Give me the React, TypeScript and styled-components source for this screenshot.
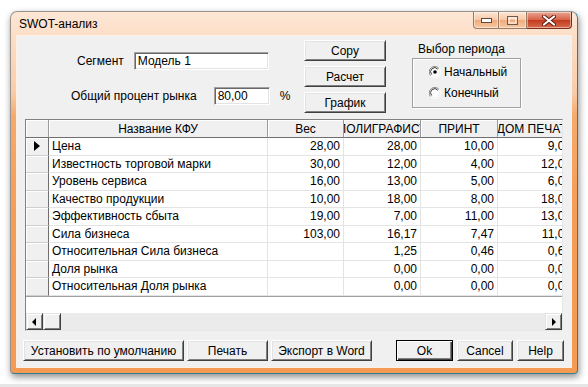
import styled, { createGlobalStyle } from "styled-components";

const GlobalStyle = createGlobalStyle`
  *, *::before, *::after { box-sizing: border-box; }
  html, body { margin: 0; padding: 0; background: #fff; }
  body {
    font-family: "Liberation Sans", Arial, sans-serif;
    font-size: 12px;
    color: #000;
  }
`;

const Page = styled.div`
  width: 588px;
  height: 387px;
  overflow: hidden;
  padding: 11px 0 0 10px;
  box-shadow: inset 0 -3px 0 #e6e6e6;
`;

const Window = styled.div`
  width: 568px;
  height: 363px;
  display: flex;
  flex-direction: column;
  border: 1px solid;
  border-color: #9a918b #2f7f8e #2f7f8e #9a918b;
  border-radius: 7px 7px 4px 4px;
  background: linear-gradient(
    to bottom,
    #fde7d6 0px,
    #fcdcc3 30px,
    #f9cca9 80px,
    #f5aa6c 104px,
    #f49d57 200px,
    #f49a52 100%
  );
  box-shadow: 1px 3px 7px rgba(0, 0, 0, 0.45);
`;

const TitleBar = styled.div`
  height: 24px;
  display: flex;
  align-items: flex-start;
  flex: none;
`;

const Title = styled.div`
  margin: 5px 0 0 8px;
  line-height: 14px;
`;

const Controls = styled.div`
  margin-left: auto;
  margin-right: 5px;
  display: flex;
  height: 17px;
`;

const CtrlButton = styled.div<{ $w: number; $close?: boolean; $first?: boolean }>`
  width: ${(p) => p.$w}px;
  height: 17px;
  display: flex;
  align-items: center;
  justify-content: center;
  border: 1px solid ${(p) => (p.$close ? "#7a2c1c" : "#9b7a64")};
  border-top: none;
  border-left: ${(p) => (p.$first ? undefined : "none")};
  border-radius: ${(p) => (p.$first ? "0 0 0 4px" : p.$close ? "0 0 4px 0" : "0")};
  background: ${(p) =>
    p.$close
      ? "linear-gradient(to bottom, #eaa594 0%, #d9644a 48%, #c33b1f 52%, #d66a4c 100%)"
      : "linear-gradient(to bottom, #fde6d5 0%, #f7c8a6 48%, #f0ab7c 52%, #f7c9a3 100%)"};
  box-shadow: inset 0 0 0 1px rgba(255, 255, 255, 0.45);
`;

const Client = styled.div`
  margin: 0 6px 6px;
  flex: 1;
  background: #f0f0f0;
  display: flex;
  flex-direction: column;
  box-shadow: 0 0 0 1px #fcefe4;
`;

const TopSection = styled.div`
  height: 83px;
  display: flex;
  flex: none;
`;

const FieldsCol = styled.div`
  width: 287px;
  display: flex;
  flex-direction: column;
  padding-top: 16px;
  gap: 17px;
`;

const FieldRow = styled.div<{ $indent: number; $gap: number }>`
  display: flex;
  align-items: center;
  height: 18px;
  padding-left: ${(p) => p.$indent}px;
  gap: ${(p) => p.$gap}px;
`;

const Label = styled.span`
  white-space: nowrap;
  line-height: 14px;
`;

const TextBox = styled.div<{ $w: number }>`
  width: ${(p) => p.$w}px;
  height: 18px;
  background: #fff;
  border: 1px solid;
  border-color: #a0a0a0 #fff #fff #a0a0a0;
  box-shadow: inset 1px 1px 0 #696969, inset -1px -1px 0 #e3e3e3;
  padding: 0 3px;
  display: flex;
  align-items: center;
  white-space: nowrap;
`;

const Percent = styled.span`
  margin-left: -7px;
`;

const ButtonsCol = styled.div`
  width: 82px;
  display: flex;
  flex-direction: column;
  padding-top: 4px;
  gap: 5px;
`;

const Button = styled.div<{ $w?: number; $default?: boolean }>`
  width: ${(p) => (p.$w ? `${p.$w}px` : "100%")};
  height: 21px;
  flex: none;
  display: flex;
  align-items: center;
  justify-content: center;
  white-space: nowrap;
  background: #f0f0f0;
  border: 1px solid;
  border-color: ${(p) => (p.$default ? "#000" : "#fff #404040 #404040 #fff")};
  box-shadow: ${(p) =>
    p.$default
      ? "inset 1px 1px 0 #fff, inset -1px -1px 0 #404040, inset -2px -2px 0 #808080"
      : "inset 1px 1px 0 #e3e3e3, inset -1px -1px 0 #808080"};
`;

const PeriodCol = styled.div`
  width: 109px;
  margin-left: 26px;
  display: flex;
  flex-direction: column;
`;

const PeriodLabel = styled.div`
  padding: 6px 0 0 6px;
  line-height: 14px;
`;

const GroupBox = styled.div`
  margin-top: 2px;
  height: 50px;
  border: 1px solid #a0a0a0;
  box-shadow: inset 1px 1px 0 #fff, 1px 1px 0 #fff;
  display: flex;
  flex-direction: column;
  padding: 6px 0 0 16px;
  gap: 7px;
`;

const RadioRow = styled.div`
  display: flex;
  align-items: center;
  gap: 3px;
  height: 14px;
  line-height: 14px;
`;

const GridBox = styled.div`
  margin: 0 8px;
  height: 212px;
  flex: none;
  border: 1px solid;
  border-color: #828282 #e6e6e6 #e6e6e6 #828282;
  background: #fff;
  display: flex;
  flex-direction: column;
  overflow: hidden;
`;

const COLS = "23px 219px 76px 77px 77px 77px";

const GridRow = styled.div<{ $h: number }>`
  display: grid;
  grid-template-columns: ${COLS};
  height: ${(p) => p.$h}px;
  flex: none;
`;

const RowsBody = styled.div`
  border-bottom: 1px solid #a0a0a0;
  flex: none;
`;

const HeadCell = styled.div`
  background: #f0f0f0;
  border-right: 1px solid #9a9a9a;
  border-bottom: 1px solid #6f6f6f;
  box-shadow: inset 1px 1px 0 #fff;
  display: flex;
  align-items: center;
  justify-content: center;
  overflow: hidden;
  white-space: nowrap;
`;

const IndCell = styled.div`
  background: #f0f0f0;
  border-right: 1px solid #6f6f6f;
  border-bottom: 1px solid #cfcfcf;
  box-shadow: inset 1px 1px 0 #fff;
  display: flex;
  align-items: center;
  justify-content: center;
`;

const DataCell = styled.div<{ $num?: boolean }>`
  border-right: 1px solid #e4e4e4;
  border-bottom: 1px solid #e4e4e4;
  display: flex;
  align-items: center;
  justify-content: ${(p) => (p.$num ? "flex-end" : "flex-start")};
  padding: 0 3px;
  overflow: hidden;
  white-space: nowrap;
`;

const Filler = styled.div`
  flex: 1;
`;

const ScrollBar = styled.div`
  height: 17px;
  flex: none;
  display: flex;
  background: #ebebeb;
`;

const ScrollBtn = styled.div<{ $w: number; $right?: boolean }>`
  width: ${(p) => p.$w}px;
  height: 17px;
  margin-left: ${(p) => (p.$right ? "auto" : "0")};
  background: #f0f0f0;
  border: 1px solid;
  border-color: #e3e3e3 #404040 #404040 #e3e3e3;
  box-shadow: inset 1px 1px 0 #fff, inset -1px -1px 0 #808080;
  display: flex;
  align-items: center;
  justify-content: center;
`;

const BottomBar = styled.div`
  margin-top: 9px;
  height: 22px;
  display: flex;
  gap: 3px;
  padding: 0 7px 0 6px;
`;

const RightGroup = styled.div`
  margin-left: auto;
  display: flex;
  gap: 4px;
`;

const Radio = ({ checked }: { checked?: boolean }) => (
  <svg width="12" height="12" viewBox="0 0 12 12">
    <path d="M10 2.5 A5 5 0 0 0 1.5 9.5" fill="none" stroke="#808080" strokeWidth="1" />
    <path d="M1.8 9.8 A5 5 0 0 0 10.2 2.2" fill="none" stroke="#fff" strokeWidth="1" />
    <circle cx="6" cy="6" r="4.2" fill="#fff" />
    <path d="M8.8 3.2 A4 4 0 0 0 2.6 8.4" fill="none" stroke="#404040" strokeWidth="1" />
    {checked && <circle cx="6" cy="6" r="1.8" fill="#000" />}
  </svg>
);

const Arrow = ({ dir }: { dir: "left" | "right" }) => (
  <svg width="5" height="8" viewBox="0 0 5 8">
    <polygon points={dir === "left" ? "4,0 4,8 0,4" : "1,0 1,8 5,4"} fill="#000" />
  </svg>
);

const rows: [string, string, string, string, string][] = [
  ["Цена", "28,00", "28,00", "10,00", "9,00"],
  ["Известность торговой марки", "30,00", "12,00", "4,00", "12,00"],
  ["Уровень сервиса", "16,00", "13,00", "5,00", "6,00"],
  ["Качество продукции", "10,00", "18,00", "8,00", "18,00"],
  ["Эффективность сбыта", "19,00", "7,00", "11,00", "13,00"],
  ["Сила бизнеса", "103,00", "16,17", "7,47", "11,00"],
  ["Относительная Сила бизнеса", "", "1,25", "0,46", "0,60"],
  ["Доля рынка", "", "0,00", "0,00", "0,00"],
  ["Относительная Доля рынка", "", "0,00", "0,00", "0,00"],
];

export default function App() {
  return (
    <Page>
      <GlobalStyle />
      <Window>
        <TitleBar>
          <Title>SWOT-анализ</Title>
          <Controls>
            <CtrlButton $w={26} $first>
              <svg width="11" height="5" viewBox="0 0 11 5">
                <rect x="0.5" y="0.5" width="10" height="4" fill="#fff" stroke="#5a4a40" />
              </svg>
            </CtrlButton>
            <CtrlButton $w={28}>
              <svg width="11" height="9" viewBox="0 0 11 9">
                <rect x="0.5" y="0.5" width="10" height="8" fill="none" stroke="#6a5a50" />
                <rect x="2" y="2" width="7" height="5" fill="none" stroke="#fff" />
              </svg>
            </CtrlButton>
            <CtrlButton $w={45} $close>
              <svg width="14" height="11" viewBox="0 0 14 11">
                <path d="M2 1.5 L12 9.5 M12 1.5 L2 9.5" stroke="#5a1a10" strokeWidth="4" strokeLinecap="round" />
                <path d="M2 1.5 L12 9.5 M12 1.5 L2 9.5" stroke="#fff" strokeWidth="2.2" strokeLinecap="round" />
              </svg>
            </CtrlButton>
          </Controls>
        </TitleBar>
        <Client>
          <TopSection>
            <FieldsCol>
              <FieldRow $indent={60} $gap={10}>
                <Label>Сегмент</Label>
                <TextBox $w={135}>Модель 1</TextBox>
              </FieldRow>
              <FieldRow $indent={54} $gap={17}>
                <Label>Общий процент рынка</Label>
                <TextBox $w={56}>80,00</TextBox>
                <Percent>%</Percent>
              </FieldRow>
            </FieldsCol>
            <ButtonsCol>
              <Button>Copy</Button>
              <Button>Расчет</Button>
              <Button>График</Button>
            </ButtonsCol>
            <PeriodCol>
              <PeriodLabel>Выбор периода</PeriodLabel>
              <GroupBox>
                <RadioRow>
                  <Radio checked />
                  Начальный
                </RadioRow>
                <RadioRow>
                  <Radio />
                  Конечный
                </RadioRow>
              </GroupBox>
            </PeriodCol>
          </TopSection>

          <GridBox>
            <GridRow $h={18}>
              <HeadCell />
              <HeadCell>Название КФУ</HeadCell>
              <HeadCell>Вес</HeadCell>
              <HeadCell>ПОЛИГРАФИСТ</HeadCell>
              <HeadCell>ПРИНТ</HeadCell>
              <HeadCell>ДОМ ПЕЧАТИ</HeadCell>
            </GridRow>
            <RowsBody>
              {rows.map((r, i) => (
                <GridRow $h={17.5} key={r[0]}>
                  <IndCell>
                    {i === 0 && (
                      <svg width="6" height="10" viewBox="0 0 6 10">
                        <polygon points="0,0 6,5 0,10" fill="#000" />
                      </svg>
                    )}
                  </IndCell>
                  <DataCell>{r[0]}</DataCell>
                  <DataCell $num>{r[1]}</DataCell>
                  <DataCell $num>{r[2]}</DataCell>
                  <DataCell $num>{r[3]}</DataCell>
                  <DataCell $num>{r[4]}</DataCell>
                </GridRow>
              ))}
            </RowsBody>
            <Filler />
            <ScrollBar>
              <ScrollBtn $w={17}>
                <Arrow dir="left" />
              </ScrollBtn>
              <ScrollBtn $w={18} />
              <ScrollBtn $w={17} $right>
                <Arrow dir="right" />
              </ScrollBtn>
            </ScrollBar>
          </GridBox>

          <BottomBar>
            <Button $w={161}>Установить по умолчанию</Button>
            <Button $w={81}>Печать</Button>
            <Button $w={101}>Экспорт в Word</Button>
            <RightGroup>
              <Button $w={57} $default>
                Ok
              </Button>
              <Button $w={56}>Cancel</Button>
              <Button $w={47}>Help</Button>
            </RightGroup>
          </BottomBar>
        </Client>
      </Window>
    </Page>
  );
}
